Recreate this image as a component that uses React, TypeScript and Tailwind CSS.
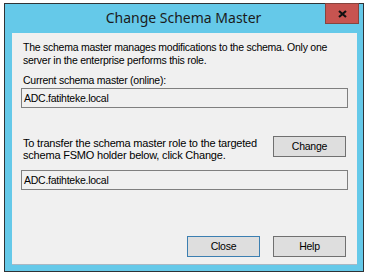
export default function App() {
  return (
    <div className="h-[276px] w-[368px] bg-white pl-[4px] pt-[3px]">
      <div className="flex h-[269px] w-[360px] flex-col border border-[#2f3336] bg-[#65c9e9]">
        <div className="flex h-[29px] items-start">
          <div className="w-[37px]" />
          <div className="flex-1 pt-[5px] text-center font-['Noto_Sans',sans-serif] text-[14px] leading-[18px] text-[#1b1b1b]">
            Change Schema Master
          </div>
          <button className="mr-[4px] mt-[-1px] flex h-[21px] w-[34px] items-center justify-center border border-[#86443e] bg-[#c75450]">
            <svg width="9" height="8" viewBox="0 0 9 8">
              <path d="M1 1 L8 7 M8 1 L1 7" stroke="#111" strokeWidth="2.2" />
            </svg>
          </button>
        </div>
        <div className="mx-[7px] mr-[6px] flex h-[232px] flex-col whitespace-nowrap border-b border-[#a9b8c4] bg-[#f0f0f0] pl-[9px] font-['Liberation_Sans',Arial,sans-serif] text-[10.5px] leading-[13px] tracking-[-0.25px] text-black">
          <p className="mt-[8px] pl-[2px]">
            The schema master manages modifications to the schema. Only one
            <br />
            server in the enterprise performs this role.
          </p>
          <p className="mt-[7px] pl-[2px]">Current schema master (online):</p>
          <div className="mt-[1px] flex h-[20px] w-[327px] items-center border border-[#7f7f7f] pl-[2px]">
            ADC.fatihteke.local
          </div>
          <div className="mt-[28px] flex w-[327px] items-start justify-between">
            <p className="pl-[2px] pt-[1px] text-[11px] leading-[12px] tracking-[-0.2px]">
              To transfer the schema master role to the targeted
              <br />
              schema FSMO holder below, click Change.
            </p>
            <button className="mr-[2px] h-[21px] w-[73px] border border-[#707070] bg-[#dedede] text-center">
              Change
            </button>
          </div>
          <div className="mt-[9px] flex h-[20px] w-[327px] items-center border border-[#7f7f7f] pl-[2px]">
            ADC.fatihteke.local
          </div>
          <div className="mt-[46px] flex w-[327px] justify-end gap-[13px] pr-[2px]">
            <button className="h-[21px] w-[73px] border border-[#3c7fb1] bg-[#dedede] text-center">
              Close
            </button>
            <button className="h-[21px] w-[73px] border border-[#707070] bg-[#dedede] text-center">
              Help
            </button>
          </div>
        </div>
      </div>
    </div>
  )
}
